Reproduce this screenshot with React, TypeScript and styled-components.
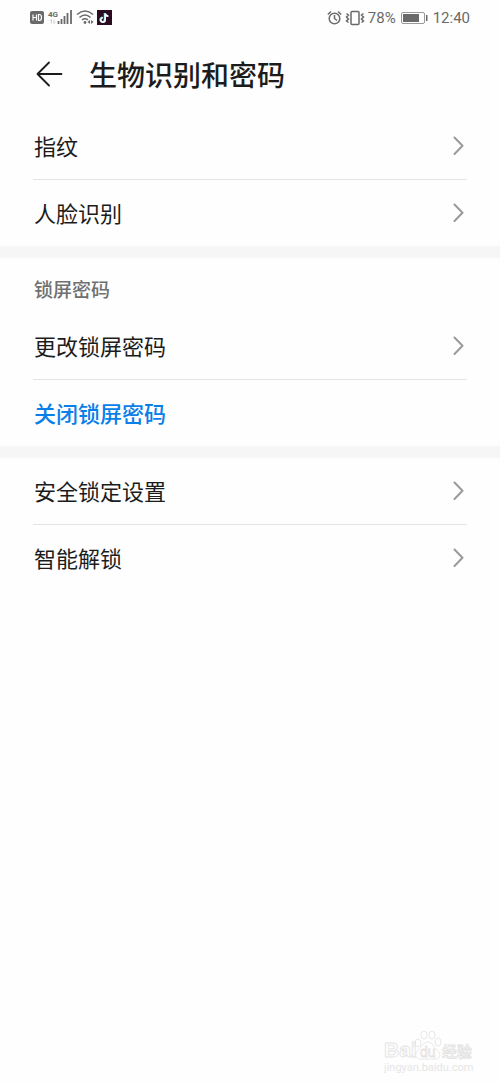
import React from 'react';
import styled, { createGlobalStyle } from 'styled-components';

const GlobalStyle = createGlobalStyle`
  * { box-sizing: border-box; }
  body {
    margin: 0;
    background: #fefefe;
    color: #1c1c1c;
    font-family: "Noto Sans CJK SC", sans-serif;
  }
`;

const Page = styled.div`
  display: flex;
  flex-direction: column;
  min-height: 100vh;
`;

const StatusBar = styled.div`
  display: flex;
  align-items: center;
  justify-content: space-between;
  height: 36px;
  padding: 0 30px;
  color: #6a6a6a;
  font-family: Roboto, sans-serif;
  font-size: 15px;
  line-height: 20px;
`;

const StatusGroup = styled.div<{ $gap: number }>`
  display: flex;
  align-items: center;
  gap: ${({ $gap }) => $gap}px;
`;

const Header = styled.header`
  display: flex;
  align-items: center;
  gap: 26px;
  height: 77px;
  padding: 0 33px 2px;
`;

const BackButton = styled.button`
  display: flex;
  padding: 0;
  border: 0;
  background: none;
  color: #1c1c1c;
  cursor: pointer;
`;

const Title = styled.h1`
  margin: 0;
  font-size: 28px;
  line-height: 40px;
  font-weight: 500;
`;

const Section = styled.section`
  padding: 0 33px;

  & + & {
    border-top: 12px solid #f6f6f6;
  }
`;

const SectionTitle = styled.h2`
  margin: 0;
  padding: 17px 0 10px 1px;
  color: #707070;
  font-size: 19px;
  line-height: 28px;
  font-weight: 500;
`;

const List = styled.ul`
  margin: 0;
  padding: 0;
  list-style: none;
`;

const Item = styled.li`
  & + & {
    border-top: 1px solid #e4e4e4;
  }
`;

const Row = styled.button<{ $accent?: boolean }>`
  display: flex;
  align-items: center;
  justify-content: space-between;
  width: 100%;
  height: 66px;
  padding: 0 0 2px 1px;
  border: 0;
  background: none;
  color: ${({ $accent }) => ($accent ? '#0a7fe8' : '#1c1c1c')};
  font-family: inherit;
  font-size: 22px;
  line-height: 32px;
  font-weight: ${({ $accent }) => ($accent ? 500 : 400)};
  text-align: left;
  cursor: pointer;
`;

const Watermark = styled.footer`
  align-self: flex-end;
  display: flex;
  flex-direction: column;
  margin-top: auto;
  padding: 0 26px 9px 0;
  color: #e6e6e6;
  font-family: Roboto, sans-serif;
  font-size: 11px;
  line-height: 14px;
`;

const Chevron = () => (
  <svg width="17" height="20" viewBox="0 0 17 20" fill="none" stroke="#9a9a9a" strokeWidth="2" strokeLinecap="round" strokeLinejoin="round" aria-hidden="true">
    <path d="M4.500 2.500L12.500 10.800L4.500 19" />
  </svg>
);

type Entry = { label: string; accent?: boolean };

const sections: { title?: string; entries: Entry[] }[] = [
  { entries: [{ label: '指纹' }, { label: '人脸识别' }] },
  { title: '锁屏密码', entries: [{ label: '更改锁屏密码' }, { label: '关闭锁屏密码', accent: true }] },
  { entries: [{ label: '安全锁定设置' }, { label: '智能解锁' }] },
];

const SignalIcons = () => (
  <svg width="84" height="20" viewBox="0 0 84 20" aria-hidden="true">
    <rect x="0" y="3" width="14" height="13" rx="2" fill="#6a6a6a" />
    <path d="M3 6.500V12.500M6.500 6.500V12.500M3 9.500H6.500M8.500 6.500V12.500H9.500Q11.500 12.500 11.500 9.500Q11.500 6.500 9.500 6.500Z" fill="none" stroke="#fff" strokeWidth="1.200" />
    <text x="18" y="9" fontSize="8" fontWeight="700" fontFamily="Roboto, sans-serif" fill="#6a6a6a">4G</text>
    <path d="M21.500 11.500V15.500M20 13L21.500 11.500M24 11.500V15.500M25.500 14L24 15.500" stroke="#cfcfcf" fill="none" />
    <path d="M28.500 13V16M31.500 11V16M34.500 8V16M37.500 5V16M41 2V16" stroke="#6a6a6a" strokeWidth="1.800" />
    <g fill="none" stroke="#6a6a6a" strokeWidth="1.600">
      <path d="M47 6.500Q55 -0.500 63 6.500" />
      <path d="M49.500 9.500Q55 4.500 60.500 9.500" />
      <path d="M52 12Q55 9.500 58 12" />
    </g>
    <circle cx="55" cy="14.500" r="1.400" fill="#6a6a6a" />
    <path d="M57.500 14L60 12V16ZM63.500 14L61 12V16Z" fill="#6a6a6a" />
    <rect x="67" y="2" width="15" height="15" fill="#2b0b20" />
    <path d="M75.200 5.500V12A2.200 2.200 0 1 1 73 9.800M75.200 5.500Q75.700 8 78.500 8.300" fill="none" stroke="#5fd6dc" strokeWidth="1.600" transform="translate(-0.700 -0.500)" />
    <path d="M75.200 5.500V12A2.200 2.200 0 1 1 73 9.800M75.200 5.500Q75.700 8 78.500 8.300" fill="none" stroke="#fff" strokeWidth="1.600" />
  </svg>
);

const AlarmVibrateIcons = () => (
  <svg width="40" height="18" viewBox="0 0 40 18" fill="none" stroke="#6a6a6a" strokeWidth="1.500" aria-hidden="true">
    <circle cx="7.500" cy="9.500" r="5.300" />
    <path d="M7.500 6V9.500L10 11.500M0.800 5.500L4 2.500M14.200 5.500L11 2.500" />
    <rect x="24" y="2.500" width="8" height="13" rx="1" />
    <path d="M19.500 4.500L21.500 6L19.500 8L21.500 10L19.500 12L21.500 13.500M36.500 4.500L34.500 6L36.500 8L34.500 10L36.500 12L34.500 13.500" />
  </svg>
);

const BatteryIcon = () => (
  <svg width="27" height="14" viewBox="0 0 27 14" aria-hidden="true">
    <rect x="0.500" y="1.500" width="23" height="11" rx="1.500" fill="none" stroke="#9a9a9a" />
    <rect x="2" y="3" width="16" height="8" fill="#6a6a6a" />
    <rect x="25" y="4" width="1.500" height="6" fill="#6a6a6a" />
  </svg>
);

const BackIcon = () => (
  <svg width="30" height="28" viewBox="0 0 30 28" fill="none" stroke="currentColor" strokeWidth="1.800" strokeLinecap="round" strokeLinejoin="round" aria-hidden="true">
    <path d="M28.500 14H4.500M16 2.500L4.500 14L16 25.500" />
  </svg>
);

const BaiduMark = () => (
  <svg width="90" height="32" viewBox="0 0 90 32" fill="none" stroke="#e2e2e2" strokeWidth="0.800" aria-hidden="true">
    <text x="0" y="28" fontSize="21" fontWeight="700" fontFamily="'Liberation Sans', sans-serif" fill="#fff">Bai</text>
    <path d="M44 13C39 13 38 18 34 21C29 26 33 31 37 30H51C57 30 57 24 53 21C49 18 49 13 44 13Z" fill="#fff" />
    <ellipse cx="34" cy="14" rx="3" ry="4" />
    <ellipse cx="40" cy="6" rx="3" ry="4" />
    <ellipse cx="48" cy="6" rx="3" ry="4" />
    <ellipse cx="54" cy="13" rx="3" ry="4" />
    <text x="36" y="28" fontSize="14" fontFamily="'Liberation Sans', sans-serif">du</text>
    <text x="58" y="28" fontSize="15" fontWeight="500" fontFamily="'Noto Sans CJK SC', sans-serif" fill="#fff">经验</text>
  </svg>
);

export default function App() {
  return (
    <>
      <GlobalStyle />
      <Page>
        <StatusBar>
          <StatusGroup $gap={2}><SignalIcons /></StatusGroup>
          <StatusGroup $gap={5}>
            <StatusGroup $gap={1}><AlarmVibrateIcons /><span>78%</span></StatusGroup>
            <BatteryIcon />
            <span>12:40</span>
          </StatusGroup>
        </StatusBar>
        <Header>
          <BackButton type="button" aria-label="返回"><BackIcon /></BackButton>
          <Title>生物识别和密码</Title>
        </Header>
        <main>
          {sections.map((section, index) => (
            <Section key={index}>
              {section.title && <SectionTitle>{section.title}</SectionTitle>}
              <List>
                {section.entries.map(({ label, accent }) => (
                  <Item key={label}>
                    <Row type="button" $accent={accent}>
                      {label}
                      {!accent && <Chevron />}
                    </Row>
                  </Item>
                ))}
              </List>
            </Section>
          ))}
        </main>
        <Watermark>
          <BaiduMark />
          <span>jingyan.baidu.com</span>
        </Watermark>
      </Page>
    </>
  );
}
